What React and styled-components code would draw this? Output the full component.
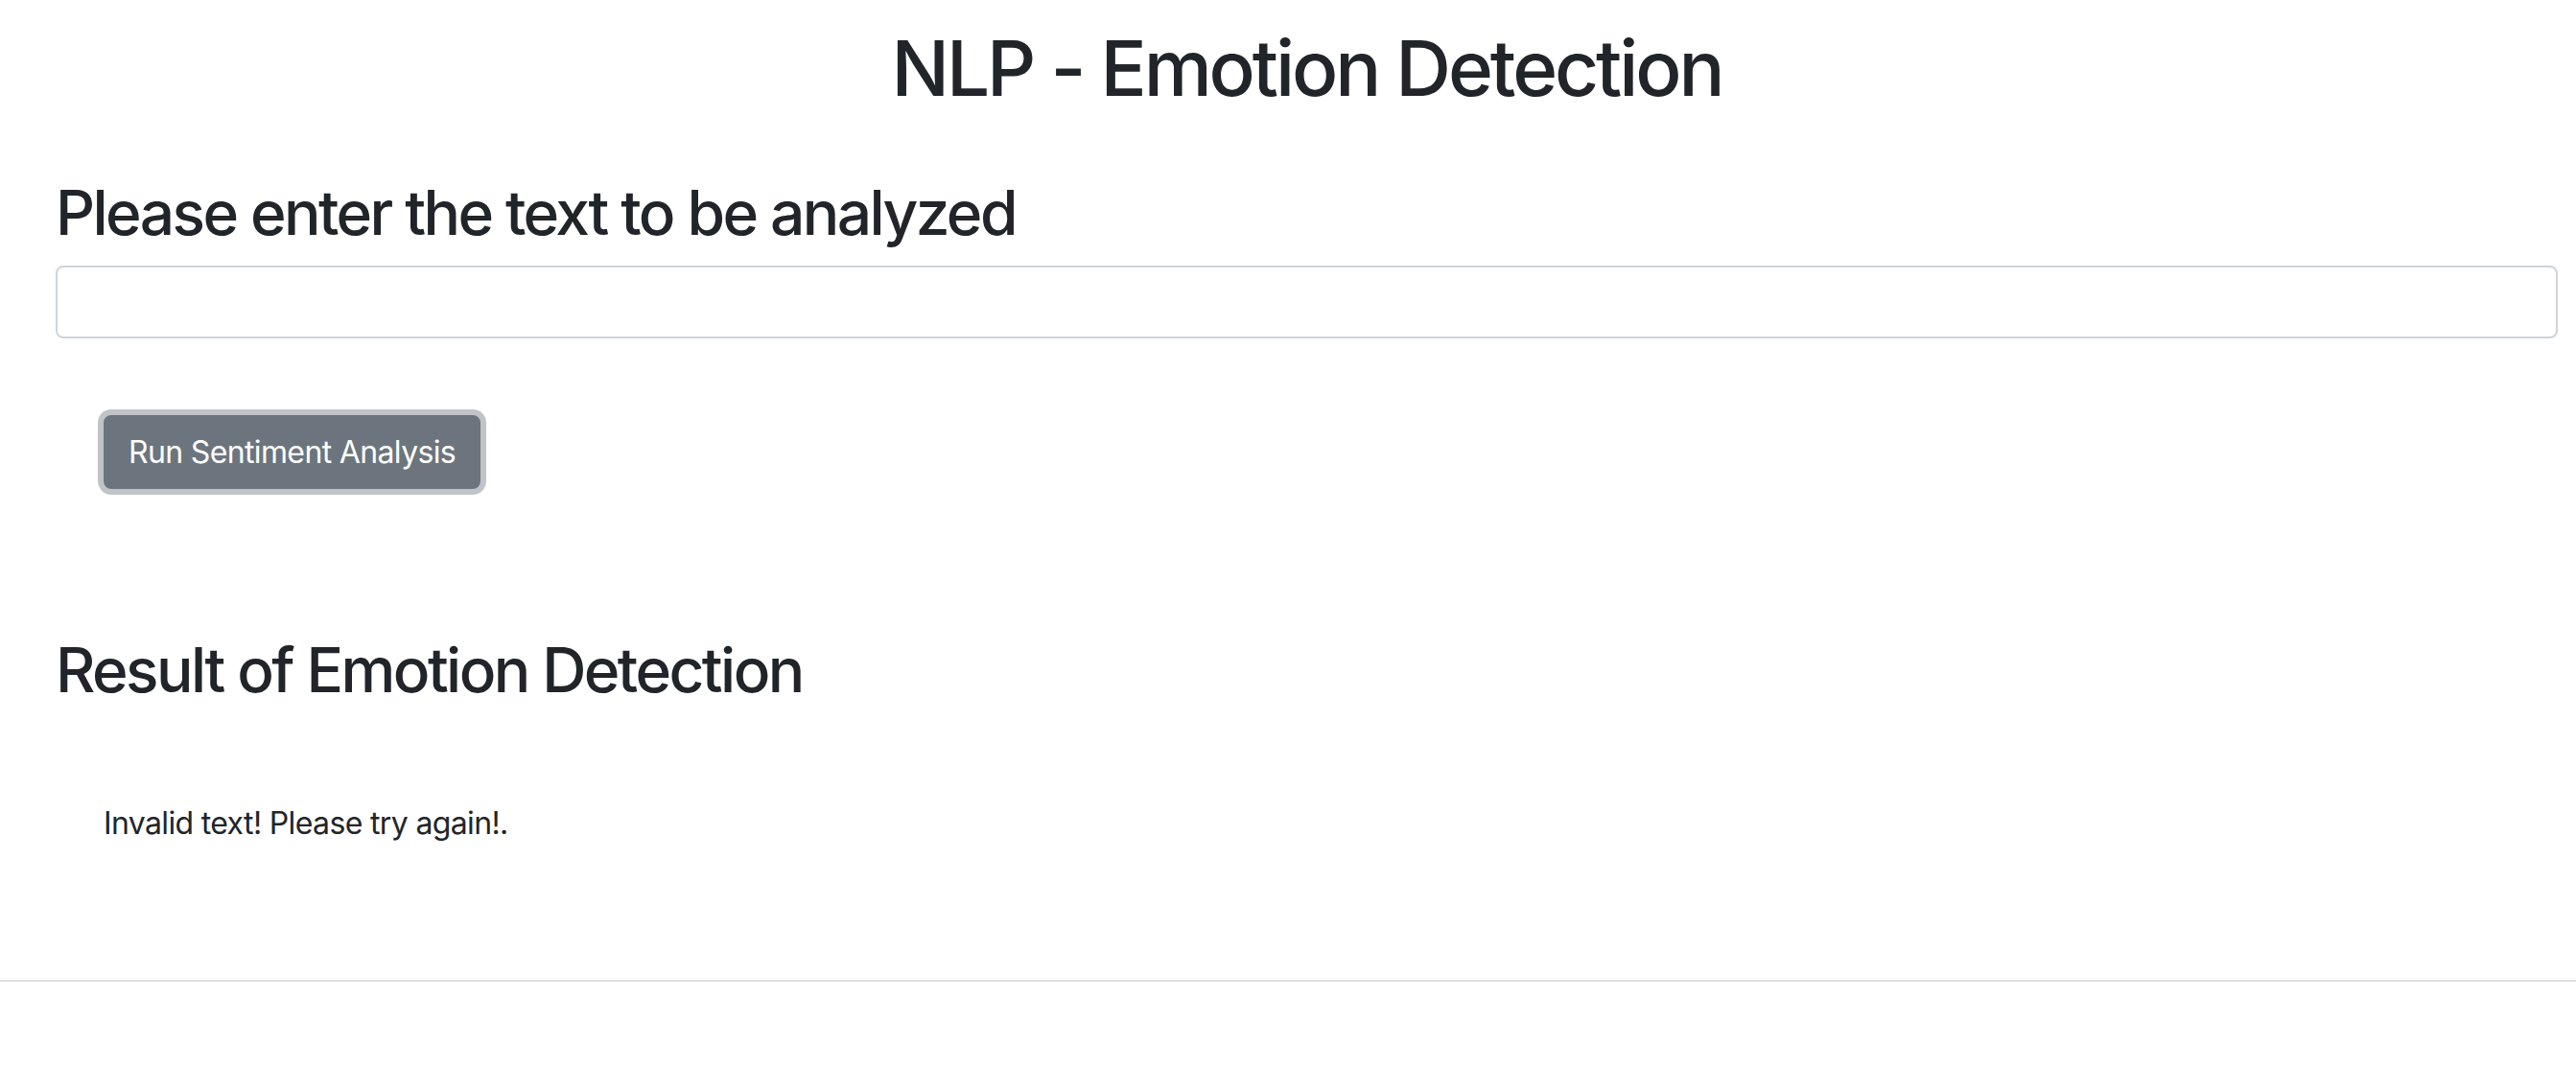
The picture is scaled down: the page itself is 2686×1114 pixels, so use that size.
import React from "react";
import styled, { createGlobalStyle } from "styled-components";

const Global = createGlobalStyle`
  html, body { margin: 0; padding: 0; background: #ffffff; }
  body {
    font-family: Inter, "Noto Sans", "Liberation Sans", sans-serif;
    color: #212529;
    font-size: 32px;
    line-height: 1.5;
  }
  * { box-sizing: border-box; }
`;

const Page = styled.div`
  display: flex;
  flex-direction: column;
  width: 2686px;
`;

const Container = styled.main`
  display: flex;
  flex-direction: column;
  padding: 0 19px 0 58px;
`;

const Title = styled.h1`
  margin: 23px 0 0;
  font-size: 80px;
  font-weight: 500;
  line-height: 96px;
  letter-spacing: -0.039em;
  text-align: center;
`;

const Heading = styled.h2`
  margin: ${(p) => p.$top}px 0 0;
  font-size: 64px;
  font-weight: 500;
  line-height: 77px;
  letter-spacing: -0.04em;
`;

const TextInput = styled.input`
  display: block;
  margin-top: 17px;
  width: 100%;
  height: 76px;
  padding: 12px 24px;
  font: inherit;
  color: #495057;
  background: #fff;
  border: 2px solid #ced4da;
  border-radius: 8px;
  outline: none;
`;

const ButtonRow = styled.div`
  display: flex;
  padding: 80px 0 0 50px;
`;

const Button = styled.button`
  height: 77px;
  padding: 0 24px;
  font-family: Inter, "Noto Sans", "Liberation Sans", sans-serif;
  font-size: 32px;
  font-weight: 400;
  line-height: 1.5;
  letter-spacing: -0.02em;
  color: #ffffff;
  background: #6c757d;
  border: 2px solid #6c757d;
  border-radius: 8px;
  box-shadow: 0 0 0 6px rgba(130, 138, 145, 0.5);
  cursor: pointer;
`;

const Result = styled.p`
  margin: 98px 0 0 50px;
  font-size: 32px;
  line-height: 48px;
  letter-spacing: -0.02em;
`;

const Rule = styled.hr`
  margin: 139px 0 0;
  border: 0;
  border-top: 2px solid rgba(0, 0, 0, 0.12);
  width: 100%;
`;

export default function App() {
  return (
    <>
      <Global />
      <Page>
        <Container>
          <Title>NLP - Emotion Detection</Title>
          <Heading $top={64}>Please enter the text to be analyzed</Heading>
          <TextInput type="text" aria-label="Text to analyze" />
          <ButtonRow>
            <Button type="button">Run Sentiment Analysis</Button>
          </ButtonRow>
          <Heading $top={150}>Result of Emotion Detection</Heading>
          <Result>Invalid text! Please try again!.</Result>
        </Container>
        <Rule />
      </Page>
    </>
  );
}
